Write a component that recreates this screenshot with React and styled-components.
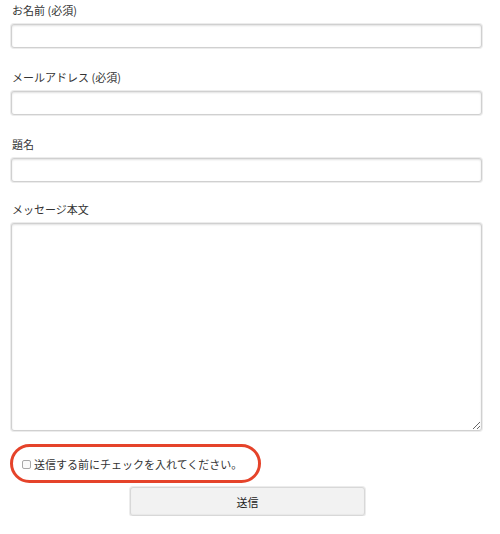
import React from 'react';
import styled, { createGlobalStyle } from 'styled-components';

const GlobalStyle = createGlobalStyle`
  * {
    margin: 0;
    padding: 0;
    box-sizing: border-box;
  }
  body {
    background: #fff;
    font-family: 'Noto Sans CJK JP', 'Liberation Sans', sans-serif;
    color: #333;
  }
`;

const Form = styled.form`
  display: flex;
  flex-direction: column;
  width: 500px;
  padding: 3px 18px 0 11px;
`;

const Field = styled.div`
  display: flex;
  flex-direction: column;
  margin-bottom: ${(p) => p.$gap || '22px'};
`;

const Label = styled.label`
  display: block;
  font-size: 11px;
  line-height: 14px;
  color: #333;
  margin-bottom: 7px;
  padding-left: 1px;
`;

const Input = styled.input`
  width: 100%;
  height: 24px;
  border: 1px solid #d0d0d0;
  border-radius: 3px;
  background: #fff;
  box-shadow: inset 0 1px 2px rgba(0, 0, 0, 0.12), 0 0 0 1px #ececec;
  outline: none;
`;

const TextArea = styled.textarea`
  display: block;
  width: 100%;
  height: 208px;
  border: 1px solid #d0d0d0;
  border-radius: 3px;
  background: #fff;
  box-shadow: inset 0 1px 2px rgba(0, 0, 0, 0.12), 0 0 0 1px #ececec;
  outline: none;
  resize: both;
`;

const ConfirmRow = styled.label`
  align-self: flex-start;
  display: inline-flex;
  align-items: center;
  gap: 3px;
  height: 39px;
  padding: 0 16px 0 9px;
  margin-left: -1px;
  border: 3px solid #e5432a;
  border-radius: 20px;
  font-size: 11px;
  color: #333;
`;

const CheckBox = styled.input`
  appearance: none;
  width: 9px;
  height: 9px;
  border: 1px solid #a8a8a8;
  border-radius: 2px;
  background: #fafafa;
  margin-top: 1px;
`;

const SubmitButton = styled.button`
  align-self: center;
  width: 235px;
  height: 29px;
  margin-top: 4px;
  margin-left: 2px;
  border: 1px solid #d8d8d8;
  border-radius: 3px;
  background: #f2f2f2;
  box-shadow: 0 0 0 1px #ececec, inset 0 -1px 1px rgba(0, 0, 0, 0.04);
  font-family: 'Noto Sans CJK JP', 'Liberation Sans', sans-serif;
  font-size: 11px;
  color: #222;
`;

function App() {
  return (
    <>
      <GlobalStyle />
      <Form onSubmit={(e) => e.preventDefault()}>
        <Field>
          <Label>お名前 (必須)</Label>
          <Input type="text" />
        </Field>
        <Field>
          <Label>メールアドレス (必須)</Label>
          <Input type="email" />
        </Field>
        <Field $gap="20px">
          <Label>題名</Label>
          <Input type="text" />
        </Field>
        <Field $gap="13px">
          <Label>メッセージ本文</Label>
          <TextArea />
        </Field>
        <ConfirmRow>
          <CheckBox type="checkbox" />
          送信する前にチェックを入れてください。
        </ConfirmRow>
        <SubmitButton type="submit">送信</SubmitButton>
      </Form>
    </>
  );
}

export default App;
